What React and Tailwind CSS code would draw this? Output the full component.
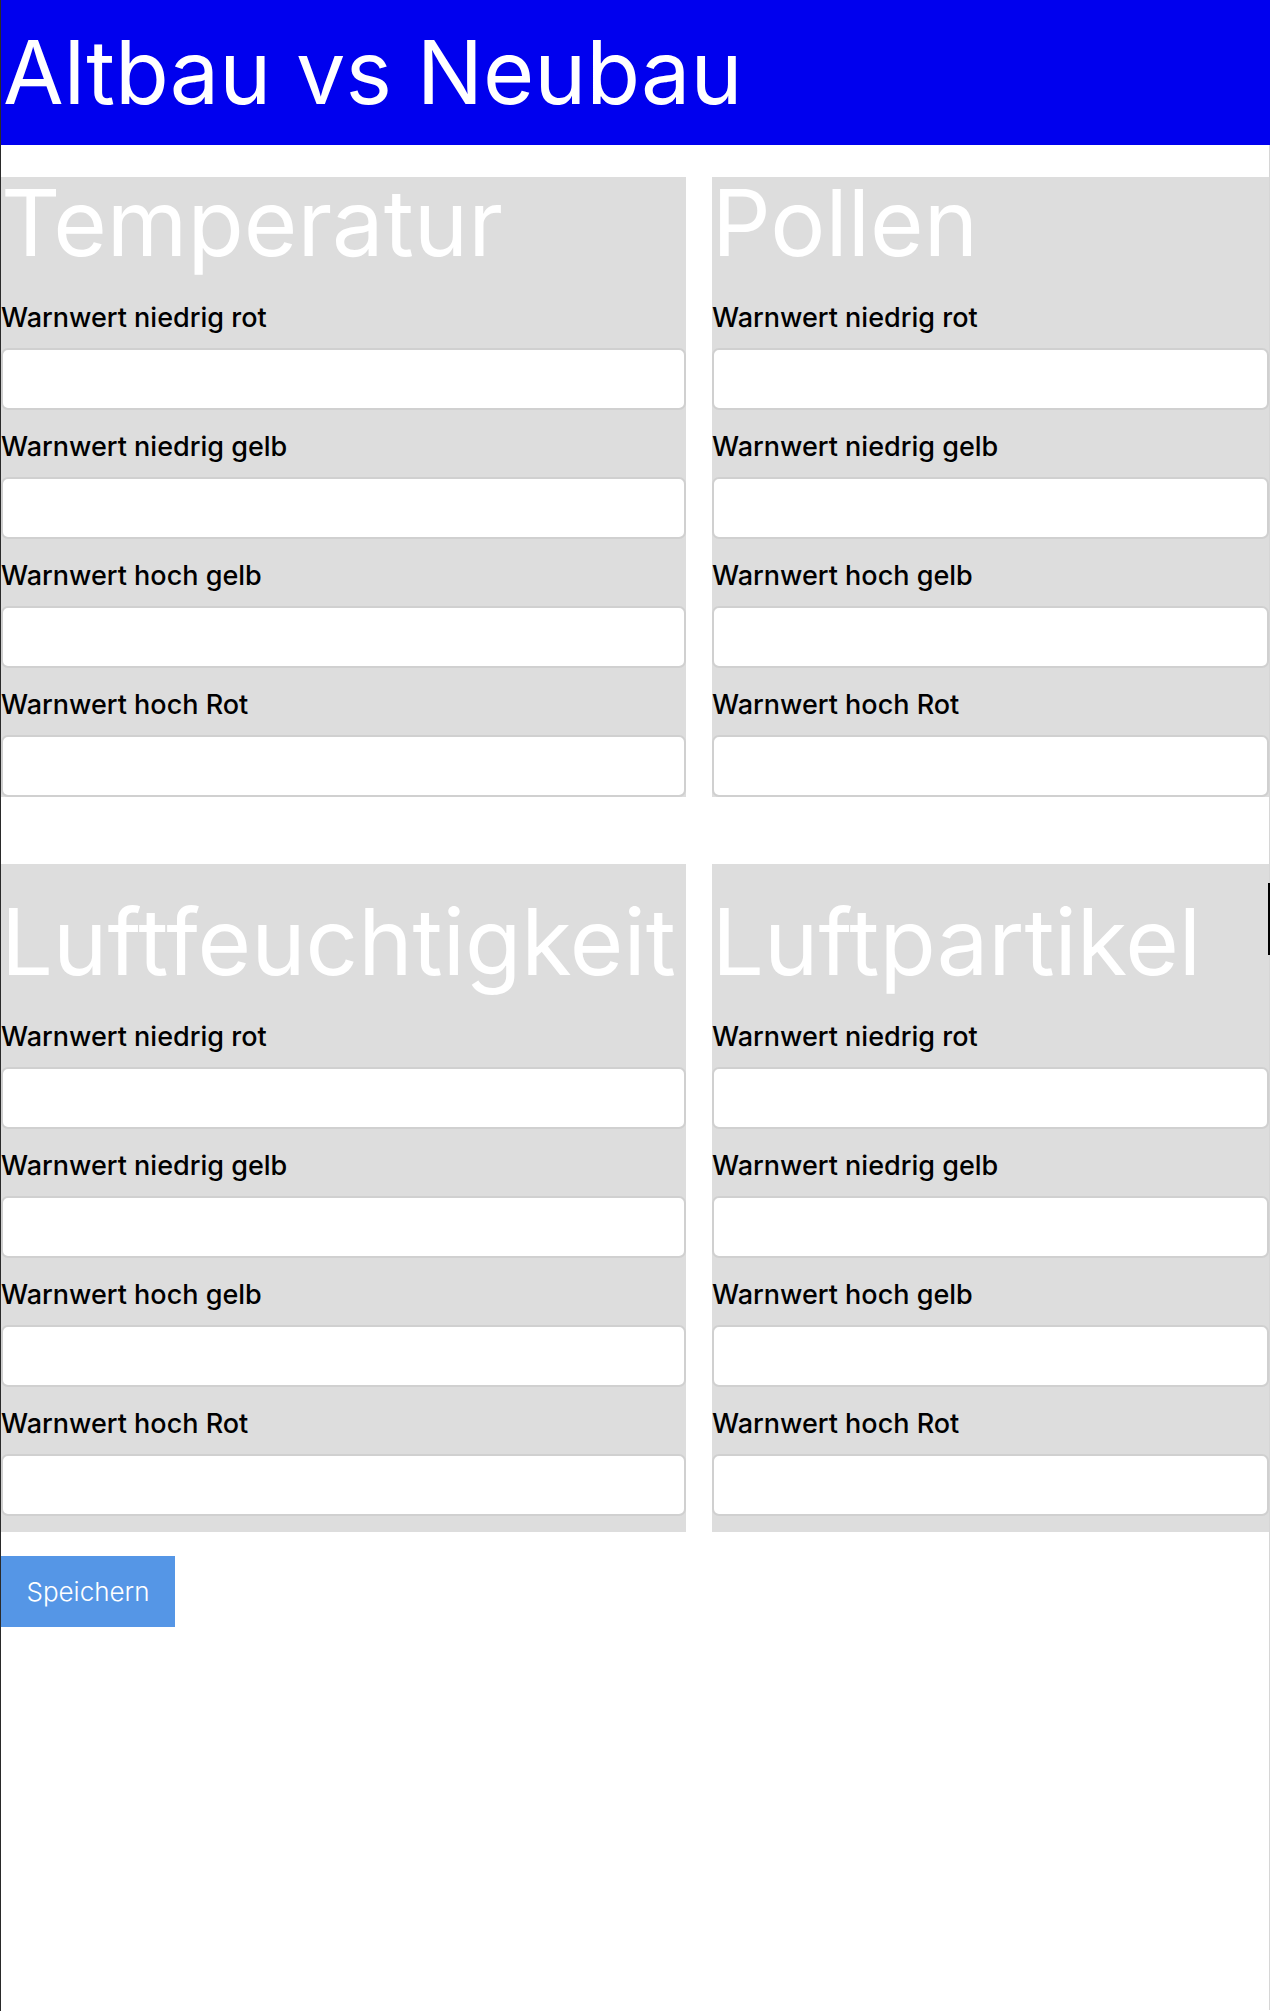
import React from "react";

const FIELDS = [
  "Warnwert niedrig rot",
  "Warnwert niedrig gelb",
  "Warnwert hoch gelb",
  "Warnwert hoch Rot",
];

function Panel({ title, className }) {
  return (
    <section className={"bg-[#dddddd] flex flex-col min-w-0 " + className}>
      <h2 className="h-[92px] text-[92px] leading-none font-normal text-white whitespace-nowrap">
        {title}
      </h2>
      <div className="mt-[33px] flex flex-col gap-[21px]">
        {FIELDS.map((f) => (
          <label key={f} className="flex flex-col">
            <span className="text-[27px] leading-[32px] font-medium text-black">{f}</span>
            <input
              type="text"
              className="mt-[14px] h-[62px] w-full bg-white border-2 border-[#d0d0d0] rounded-[7px] outline-none"
            />
          </label>
        ))}
      </div>
    </section>
  );
}

export default function App() {
  return (
    <div
      className="relative min-h-screen bg-white border-l border-[#2a2a2a]"
      style={{ fontFamily: "Inter, 'Open Sans', 'Liberation Sans', sans-serif" }}
    >
      <header className="h-[145px] bg-[#0000ee] pt-[28px] pl-[2px]">
        <h1 className="text-[88px] leading-none font-normal text-white">
          Altbau vs Neubau
        </h1>
      </header>
      <main className="border-r border-[#d6d6d6] min-h-[1865px] pt-[32px]">
        <div className="flex gap-[26px]">
          <Panel title="Temperatur" className="w-[685px]" />
          <Panel title="Pollen" className="flex-1" />
        </div>
        <div className="flex gap-[26px] mt-[67px]">
          <Panel title="Luftfeuchtigkeit" className="w-[685px] pt-[32px] pb-[16px]" />
          <Panel title="Luftpartikel" className="flex-1 pt-[32px] pb-[16px]" />
        </div>
        <button className="mt-[24px] h-[71px] w-[174px] bg-[#5596e6] text-white text-[26px] font-light">
          Speichern
        </button>
      </main>
      <div className="absolute right-0 top-[883px] w-[2px] h-[72px] bg-black" />
    </div>
  );
}
